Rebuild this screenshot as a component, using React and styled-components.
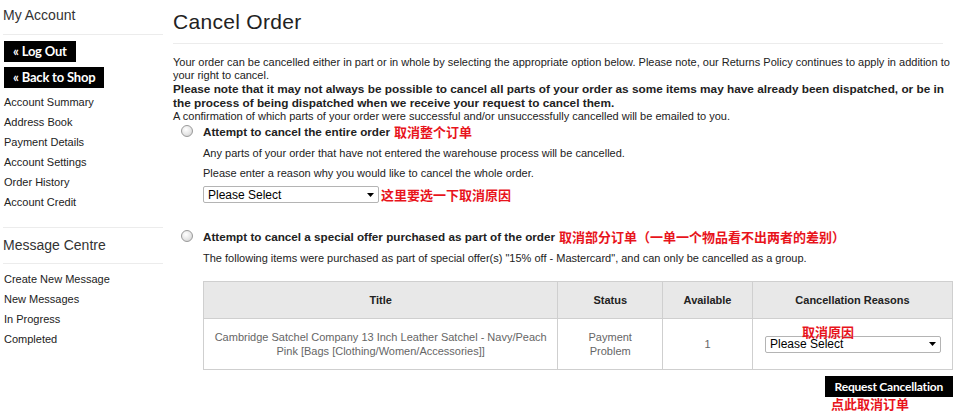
import React from 'react';
import styled, { createGlobalStyle } from 'styled-components';

const GlobalStyle = createGlobalStyle`
  * { box-sizing: border-box; }
  body {
    margin: 0;
    background: #fff;
    color: #222;
    font-family: "Liberation Sans", Arial, sans-serif;
    font-size: 11px;
  }
`;

const Page = styled.div`
  display: flex;
  align-items: flex-start;
  width: 961px;
  padding-right: 8px;
`;

const Sidebar = styled.aside`
  width: 163px;
  flex-shrink: 0;
  padding-left: 3px;
`;

const SideTitle = styled.h3`
  margin: 0;
  font-size: 14px;
  font-weight: normal;
  line-height: 18px;
  color: #333;
  padding: ${(p) => (p.$first ? '6px 0 10px' : '8px 0 9px')};
  border-bottom: 1px solid #ececec;
`;

const SideSection = styled.div`
  margin-top: 15px;
  border-top: 1px solid #ececec;
`;

const BlackButton = styled.button`
  display: block;
  border: 0;
  background: #000;
  color: #fff;
  font-family: Lato, "Liberation Sans", sans-serif;
  font-weight: 700;
  font-size: ${(p) => (p.$small ? '12px' : '13px')};
  letter-spacing: -0.2px;
  height: 21px;
  line-height: 21px;
  padding: 0 ${(p) => (p.$small ? '10px' : '9px')};
  cursor: pointer;
`;

const ButtonStack = styled.div`
  display: flex;
  flex-direction: column;
  align-items: flex-start;
  gap: 5px;
  padding: 6px 0 0 1px;
`;

const LinkList = styled.ul`
  list-style: none;
  margin: ${(p) => p.$top || '4px'} 0 0;
  padding: 0 0 0 1px;
  li {
    line-height: 20px;
    font-size: 11px;
    color: #222;
  }
`;

const Main = styled.main`
  flex: 1;
  margin-left: 10px;
`;

const PageTitle = styled.h1`
  margin: 0;
  font-family: "Liberation Sans", Arial, sans-serif;
  font-weight: normal;
  font-size: 21px;
  letter-spacing: 0.3px;
  line-height: 28px;
  color: #222;
  padding: 8px 0 7px;
  border-bottom: 1px solid #ececec;
  margin-right: 10px;
`;

const Intro = styled.p`
  margin: 12px 0 0;
  line-height: 13px;
`;

const Strong = styled.p`
  margin: 0;
  font-weight: bold;
  font-size: 11.8px;
  line-height: 14px;
`;

const Plain = styled.p`
  margin: 0;
  line-height: 13px;
`;

const Option = styled.section`
  margin-top: ${(p) => p.$top || '0px'};
`;

const OptionHead = styled.label`
  display: flex;
  align-items: center;
  height: 16px;
  padding-left: 8px;
  font-weight: bold;
  font-size: 11.7px;
`;

const Radio = styled.span`
  width: 12px;
  height: 12px;
  border-radius: 50%;
  border: 1px solid #9a9a9a;
  background: radial-gradient(circle at 40% 35%, #fff 0%, #e6e6e6 55%, #c8c8c8 100%);
  margin-right: 10px;
  flex-shrink: 0;
`;

const Note = styled.span`
  font-family: "Noto Sans CJK SC", sans-serif;
  font-weight: bold;
  font-size: 13px;
  color: #e8141c;
  margin-left: ${(p) => p.$gap || '4px'};
  white-space: nowrap;
`;

const OptionBody = styled.div`
  padding-left: 30px;
  margin-top: 4px;
`;

const Line = styled.p`
  margin: 0;
  line-height: 20px;
`;

const SelectRow = styled.div`
  display: flex;
  align-items: center;
  margin-top: 2px;
`;

const FakeSelect = styled.div`
  display: flex;
  align-items: center;
  justify-content: space-between;
  width: ${(p) => p.$w};
  height: 17px;
  border: 1px solid #b4b4b4;
  border-radius: 2px;
  padding: 0 4px;
  font-size: 12px;
  color: #000;
  background: #fff;
`;

const Table = styled.table`
  margin: 13px 0 0 30px;
  width: 750px;
  border-collapse: collapse;
  th, td {
    border: 1px solid #cfcfcf;
    text-align: center;
    font-size: 11px;
  }
  th {
    background: #e8e8e8;
    height: 37px;
    font-weight: bold;
    color: #222;
  }
  td {
    height: 51px;
    color: #666;
    line-height: 14px;
  }
`;

const ReasonCell = styled.td`
  position: relative;
  && { padding: 0 11px 0 12px; }
`;

const CellNote = styled.span`
  position: absolute;
  left: 49px;
  top: 6px;
  font-family: "Noto Sans CJK SC", sans-serif;
  font-weight: bold;
  font-size: 13px;
  line-height: 13px;
  color: #e8141c;
`;

const Actions = styled.div`
  display: flex;
  flex-direction: column;
  align-items: flex-end;
  margin-top: 6px;
`;

const ActionNote = styled.span`
  font-family: "Noto Sans CJK SC", sans-serif;
  font-weight: bold;
  font-size: 13px;
  line-height: 14px;
  color: #e8141c;
  align-self: flex-end;
  margin-right: 44px;
`;

const Arrow = () => (
  <svg width="7" height="4" viewBox="0 0 7 4">
    <path d="M0 0h7L3.5 4z" fill="#000" />
  </svg>
);

const Select = ({ width }) => (
  <FakeSelect $w={width}>
    <span>Please Select</span>
    <Arrow />
  </FakeSelect>
);

const accountLinks = [
  'Account Summary',
  'Address Book',
  'Payment Details',
  'Account Settings',
  'Order History',
  'Account Credit',
];
const messageLinks = ['Create New Message', 'New Messages', 'In Progress', 'Completed'];

export default function App() {
  return (
    <>
      <GlobalStyle />
      <Page>
        <Sidebar>
          <SideTitle $first>My Account</SideTitle>
          <ButtonStack>
            <BlackButton>« Log Out</BlackButton>
            <BlackButton>« Back to Shop</BlackButton>
          </ButtonStack>
          <LinkList>
            {accountLinks.map((l) => (
              <li key={l}>{l}</li>
            ))}
          </LinkList>
          <SideSection>
            <SideTitle>Message Centre</SideTitle>
            <LinkList $top="5px">
              {messageLinks.map((l) => (
                <li key={l}>{l}</li>
              ))}
            </LinkList>
          </SideSection>
        </Sidebar>

        <Main>
          <PageTitle>Cancel Order</PageTitle>
          <Intro>
            Your order can be cancelled either in part or in whole by selecting the appropriate
            option below. Please note, our Returns Policy continues to apply in addition to your
            right to cancel.
          </Intro>
          <Strong>
            Please note that it may not always be possible to cancel all parts of your order as
            some items may have already been dispatched, or be in the process of being dispatched
            when we receive your request to cancel them.
          </Strong>
          <Plain>
            A confirmation of which parts of your order were successful and/or unsuccessfully
            cancelled will be emailed to you.
          </Plain>

          <Option>
            <OptionHead>
              <Radio />
              Attempt to cancel the entire order
              <Note>取消整个订单</Note>
            </OptionHead>
            <OptionBody>
              <Line>
                Any parts of your order that have not entered the warehouse process will be
                cancelled.
              </Line>
              <Line>Please enter a reason why you would like to cancel the whole order.</Line>
              <SelectRow>
                <Select width="176px" />
                <Note $gap="2px">这里要选一下取消原因</Note>
              </SelectRow>
            </OptionBody>
          </Option>

          <Option $top="24px">
            <OptionHead>
              <Radio />
              Attempt to cancel a special offer purchased as part of the order
              <Note>取消部分订单（一单一个物品看不出两者的差别）</Note>
            </OptionHead>
            <OptionBody>
              <Line>
                The following items were purchased as part of special offer(s) "15% off -
                Mastercard", and can only be cancelled as a group.
              </Line>
            </OptionBody>
          </Option>

          <Table>
            <colgroup>
              <col style={{ width: '355px' }} />
              <col style={{ width: '105px' }} />
              <col style={{ width: '90px' }} />
              <col style={{ width: '200px' }} />
            </colgroup>
            <thead>
              <tr>
                <th>Title</th>
                <th>Status</th>
                <th>Available</th>
                <th>Cancellation Reasons</th>
              </tr>
            </thead>
            <tbody>
              <tr>
                <td>
                  Cambridge Satchel Company 13 Inch Leather Satchel - Navy/Peach
                  <br />
                  Pink [Bags [Clothing/Women/Accessories]]
                </td>
                <td>
                  Payment
                  <br />
                  Problem
                </td>
                <td>1</td>
                <ReasonCell>
                  <CellNote>取消原因</CellNote>
                  <Select width="176px" />
                </ReasonCell>
              </tr>
            </tbody>
          </Table>

          <Actions>
            <BlackButton $small>Request Cancellation</BlackButton>
            <ActionNote>点此取消订单</ActionNote>
          </Actions>
        </Main>
      </Page>
    </>
  );
}
